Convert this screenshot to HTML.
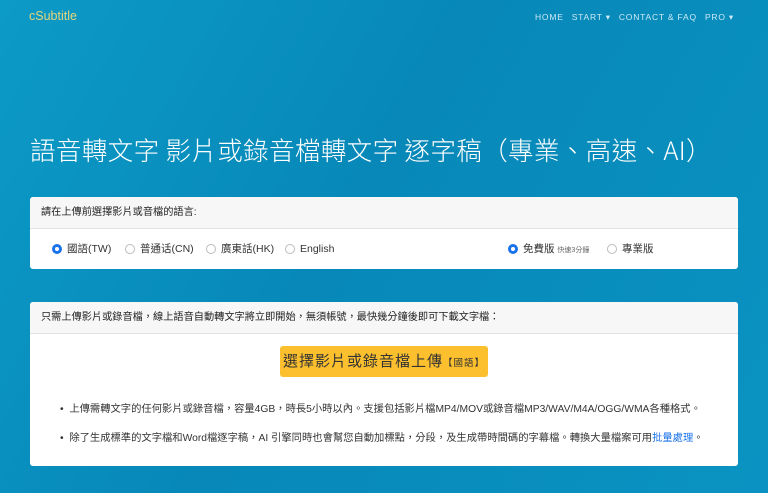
<!DOCTYPE html>
<html><head><meta charset="utf-8"><style>
body{margin:0;width:768px;height:493px;overflow:hidden;font-family:"Liberation Sans","Noto Sans CJK TC",sans-serif;background:linear-gradient(120deg,#0c9ac6 0%,#0788b8 45%,#0a93c2 100%);position:relative}
.logo{position:absolute;left:29px;top:9px;color:#e3d57a;font-size:12.5px}
.nav{position:absolute;right:34px;top:12px;color:#cfeaf4;font-size:8.5px;letter-spacing:.8px}
.nav span{margin-left:8px}
h1{position:absolute;left:30px;top:131px;margin:0;font-weight:300;color:#fff;font-size:25.6px;font-family:"Noto Sans CJK TC","Liberation Sans",sans-serif;letter-spacing:.3px;white-space:nowrap}
.card{position:absolute;left:30px;width:708px;background:#fff;border-radius:3px;overflow:hidden;color:#333}
.hd{background:#f7f7f7;border-bottom:1px solid #e3e3e3;padding:0 11px;font-size:10.2px;color:#222;white-space:nowrap}
.r{display:inline-block;width:8px;height:8px;border-radius:50%;border:1px solid #bbb;vertical-align:middle;margin-right:5px;box-sizing:content-box}
.r.on{border:3px solid #1a73e8;width:4px;height:4px}
.opt{position:absolute;top:45px;font-size:10.5px;line-height:14px;color:#333;white-space:nowrap}
.btn{position:absolute;left:250px;top:44px;width:208px;height:31px;background:#fcc02e;border-radius:3px;text-align:center;line-height:31px;font-size:15px;color:#333;letter-spacing:1px;white-space:nowrap}
.li{position:absolute;left:30px;font-size:10.3px;color:#333;white-space:nowrap}
</style></head><body>
<div class="logo">cSubtitle</div>
<div class="nav"><span>HOME</span><span>START ▾</span><span>CONTACT &amp; FAQ</span><span>PRO ▾</span></div>
<h1>語音轉文字 影片或錄音檔轉文字 逐字稿（專業、高速、AI）</h1>
<div class="card" style="top:197px;height:72px">
<div class="hd" style="height:31px;line-height:31px">請在上傳前選擇影片或音檔的語言:</div>
<div class="opt" style="left:22px"><span class="r on"></span>國語(TW)</div>
<div class="opt" style="left:95px"><span class="r"></span>普通话(CN)</div>
<div class="opt" style="left:176px"><span class="r"></span>廣東話(HK)</div>
<div class="opt" style="left:255px"><span class="r"></span>English</div>
<div class="opt" style="left:478px"><span class="r on"></span>免費版 <span style="font-size:7px;color:#666">快速3分鐘</span></div>
<div class="opt" style="left:577px"><span class="r"></span>專業版</div>
</div>
<div class="card" style="top:302px;height:164px">
<div class="hd" style="height:31px;line-height:31px">只需上傳影片或錄音檔，線上語音自動轉文字將立即開始，無須帳號，最快幾分鐘後即可下載文字檔：</div>
<div class="btn">選擇影片或錄音檔上傳<span style="font-size:9.5px">【國語】</span></div>
<div class="li" style="top:98px">•&nbsp; 上傳需轉文字的任何影片或錄音檔，容量4GB，時長5小時以內。支援包括影片檔MP4/MOV或錄音檔MP3/WAV/M4A/OGG/WMA各種格式。</div>
<div class="li" style="top:127px">•&nbsp; 除了生成標準的文字檔和Word檔逐字稿，AI 引擎同時也會幫您自動加標點，分段，及生成帶時間碼的字幕檔。轉換大量檔案可用<span style="color:#1a73e8">批量處理</span>。</div>
</div>
</body></html>
